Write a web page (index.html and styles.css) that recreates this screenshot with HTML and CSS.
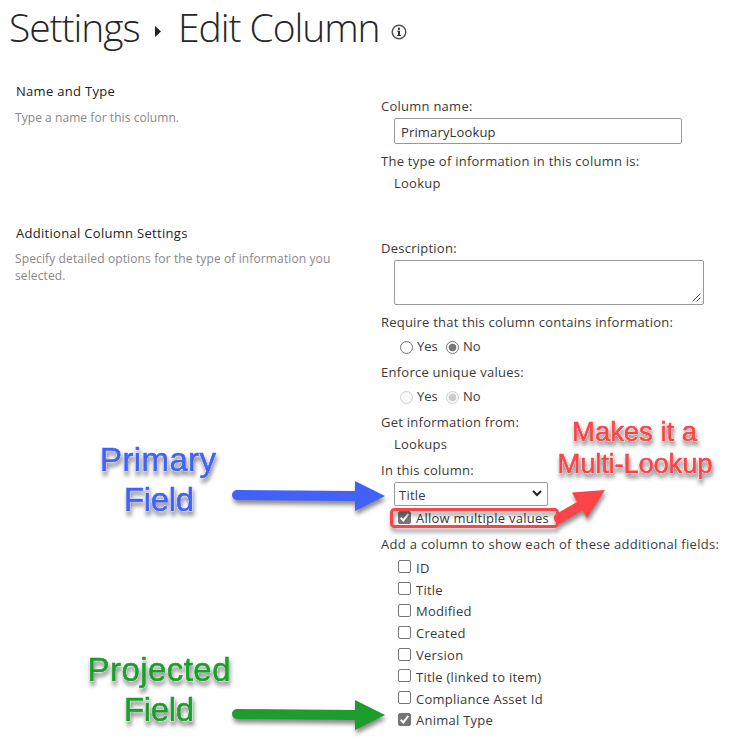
FILE: index.html
```html
<!DOCTYPE html>
<html lang="en">
<head>
<meta charset="utf-8">
<title>Edit Column</title>
<link rel="stylesheet" href="styles.css">
</head>
<body>
<header class="page-title">
  <h1><span class="crumb">Settings</span><svg class="sep" width="6" height="11" viewBox="0 0 6 11"><path d="M0 0L6 5.5L0 11Z" fill="#222"/></svg><span class="current">Edit Column</span></h1>
  <svg class="info" width="16" height="16" viewBox="0 0 16 16"><circle cx="8" cy="8" r="6.8" fill="none" stroke="#555" stroke-width="1.5"/><path d="M7 3.7h2v2H7zM6.2 6.8H9v4.3h.9v1H6.2v-1H7V7.8h-.8z" fill="#333"/></svg>
</header>
<main>
  <section class="row row-name">
    <div class="about">
      <h2>Name and Type</h2>
      <p class="short">Type a name for this column.</p>
    </div>
    <div class="fields">
      <label class="line" for="name">Column name:</label>
      <input class="name" id="name" type="text" value="PrimaryLookup">
      <div class="line type-label">The type of information in this column is:</div>
      <div class="line value">Lookup</div>
    </div>
  </section>
  <section class="row">
    <div class="about">
      <h2>Additional Column Settings</h2>
      <p>Specify detailed options for the type of information you<br>selected.</p>
    </div>
    <div class="fields">
      <div class="line">Description:</div>
      <div class="textarea"><svg width="9" height="9" viewBox="0 0 9 9"><path d="M.5 8.5l8-8M4.5 8.5l4-4" stroke="#555" fill="none"/></svg></div>
      <div class="line require">Require that this column contains information:</div>
      <div class="radios"><i class="radio"></i><span class="yes">Yes</span><i class="radio on"></i><span>No</span></div>
      <div class="line">Enforce unique values:</div>
      <div class="radios disabled"><i class="radio"></i><span class="yes">Yes</span><i class="radio on"></i><span>No</span></div>
      <div class="line">Get information from:</div>
      <div class="line value">Lookups</div>
      <div class="line in">In this column:</div>
      <div class="select"><span>Title</span><svg width="10" height="7" viewBox="0 0 10 7"><path d="M1 1l4 4 4-4" fill="none" stroke="#222" stroke-width="2"/></svg></div>
      <div class="check multiple"><i class="box on"><svg viewBox="0 0 13 13"><path d="M2.7 6.8l2.6 2.6L10.3 3" fill="none" stroke="#fff" stroke-width="2"/></svg></i><span>Allow multiple values</span></div>
      <div class="line add">Add a column to show each of these additional fields:</div>
      <div class="checks">
        <div class="check"><i class="box"></i><span>ID</span></div>
        <div class="check"><i class="box"></i><span>Title</span></div>
        <div class="check"><i class="box"></i><span>Modified</span></div>
        <div class="check"><i class="box"></i><span>Created</span></div>
        <div class="check"><i class="box"></i><span>Version</span></div>
        <div class="check"><i class="box"></i><span>Title (linked to item)</span></div>
        <div class="check"><i class="box"></i><span>Compliance Asset Id</span></div>
        <div class="check"><i class="box on"><svg viewBox="0 0 13 13"><path d="M2.7 6.8l2.6 2.6L10.3 3" fill="none" stroke="#fff" stroke-width="2"/></svg></i><span>Animal Type</span></div>
      </div>
    </div>
  </section>
</main>
<svg class="notes" width="736" height="743" viewBox="0 0 736 743">
  <g class="blue">
    <text x="100" y="471" textLength="116">Primary</text>
    <text x="124" y="511" textLength="70">Field</text>
    <path d="M237 490L355 491V481L385 496L355 511V501L237 500A5 5 0 0 1 237 490Z"/>
  </g>
  <g class="green">
    <text x="87.500" y="681" textLength="143">Projected</text>
    <text x="124" y="721" textLength="70">Field</text>
    <path d="M237 709L355 710V700L385 715L355 730V720L237 719A5 5 0 0 1 237 709Z"/>
  </g>
  <g class="red">
    <text class="small" x="572" y="441" textLength="125">Makes it a</text>
    <text class="small" x="557.500" y="473" textLength="155">Multi-Lookup</text>
    <rect x="391.500" y="509.500" width="166" height="17" rx="3"/>
    <path d="M556 514L577 502L572 492.500L605 490L587 518L582.500 510.500L561 523A5.200 5.200 0 0 1 556 514Z"/>
  </g>
</svg>
</body>
</html>
```
FILE: styles.css
```css
* { box-sizing: border-box; }
body { margin: 0; width: 736px; height: 743px; overflow: hidden; position: relative; background: #fff; color: #3a3a3a; font: 13px/20px "Open Sans", "Noto Sans", sans-serif; letter-spacing: .25px; }
.page-title { display: flex; height: 81px; padding-left: 9px; color: #262626; }
h1 { margin: 0; display: flex; font-size: 39px; line-height: 54px; font-weight: 300; letter-spacing: -1.05px; white-space: nowrap; }
.crumb { width: 146px; }
.sep { margin: 26px 17px 0 0; }
.current { width: 213px; }
.info { margin-top: 24px; }
.row { display: grid; grid-template-columns: 381px 1fr; }
.row-name { height: 142px; }
.about { padding-left: 15px; }
h2 { margin: 0 0 0 1px; font-size: 13px; line-height: 20px; font-weight: 400; letter-spacing: .3px; color: #222; }
.about p { margin: 7px 0 0; font-size: 12px; line-height: 17px; letter-spacing: .12px; color: #888; white-space: nowrap; }
.about .short { letter-spacing: .06px; margin-top: 8px; }
.fields { padding-top: 15px; }
.line { display: block; height: 20px; white-space: nowrap; }
.require { letter-spacing: .21px; }
.add { letter-spacing: .3px; }
.name { display: block; width: 288px; height: 26px; margin: 2px 0 7px 13px; padding: 1px 6px 0; border: 1px solid #999; border-radius: 2px; font: inherit; letter-spacing: .15px; color: #333; outline: 0; }
.value { margin-left: 13px; margin-top: 2px; }
.textarea { display: flex; justify-content: flex-end; align-items: flex-end; width: 310px; height: 45px; margin: 2px 0 7px 13px; padding: 2px; border: 1px solid #999; border-radius: 2px; }
.radios { display: flex; align-items: center; height: 20px; margin: 4px 0 6px 19px; letter-spacing: 0; }
.radio { width: 13px; height: 13px; margin: 3px 4px 0 0; border: 1px solid #777; border-radius: 50%; }
.radio.on { background: radial-gradient(circle, #777 0 3.5px, #fff 4.2px); }
.disabled .radio { border-color: #d0d0d0; background: #f8f8f8; }
.disabled .radio.on { background: radial-gradient(circle, #ccc 0 3.5px, #f8f8f8 4.2px); }
.yes { width: 29px; }
.in { margin-top: 6px; }
.select { display: flex; justify-content: space-between; align-items: center; width: 154px; height: 24px; margin: 2px 0 2px 13px; padding: 1px 5px 0 4px; border: 1px solid #999; border-radius: 2px; }
.select svg { margin-top: -2px; }
.check { display: flex; align-items: center; height: 21.8px; margin-left: 17px; white-space: nowrap; }
.multiple { height: 20px; margin-bottom: 6px; }
.box { width: 13px; height: 13px; margin: -2px 5px 0 0; border: 1px solid #777; border-radius: 2px; }
.box.on { background: #757575; }
.box svg { display: block; width: 13px; height: 13px; margin: -1px; }
.checks { padding-top: 3px; }
.notes { position: absolute; left: 0; top: 0; pointer-events: none; letter-spacing: 0; }
.notes g { filter: drop-shadow(1px 4px 2px rgba(0, 0, 0, .45)); }
.notes text { font: 33px "Liberation Sans", sans-serif; stroke-width: .6px; filter: drop-shadow(0 0 .6px #fff) drop-shadow(0 0 .6px #fff) drop-shadow(0 0 .5px #fff); }
.notes text.small { font-size: 27.5px; }
.blue { fill: #4161f8; stroke: #4161f8; }
.green { fill: #1c9d2c; stroke: #1c9d2c; }
.red { fill: #fb4447; stroke: #fb4447; }
.notes path { stroke: none; }
.red rect { fill: none; stroke-width: 3px; }
```
